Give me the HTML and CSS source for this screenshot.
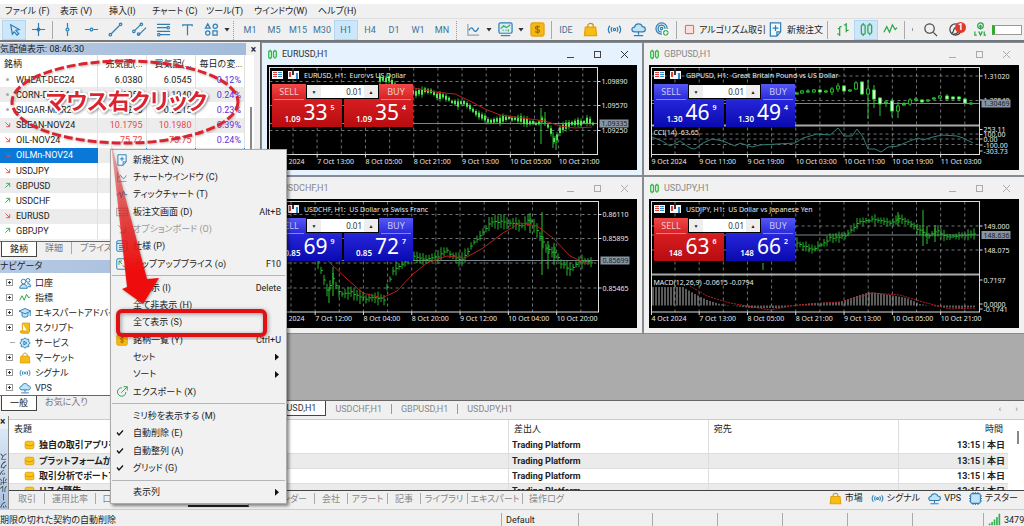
FILE: index.html
```html
<!DOCTYPE html>
<html lang="ja">
<head>
<meta charset="utf-8">
<title>Trading Platform</title>
<link rel="stylesheet" href="styles.css">
</head>
<body>
<svg class="defs" aria-hidden="true">
  <symbol id="i-cursor" viewBox="0 0 16 16"><path d="M4 3l9 5-3.500 1 3 3.500-1.800 1.500-3-3.500-2 2.500z"/></symbol>
  <symbol id="i-cross" viewBox="0 0 16 16"><path d="M8 1v14M1 8h14"/><circle cx="8" cy="8" r="1.500"/></symbol>
  <symbol id="i-vline" viewBox="0 0 16 16"><path d="M8 1v5M8 10v5"/><circle cx="8" cy="8" r="1.500"/></symbol>
  <symbol id="i-hline" viewBox="0 0 16 16"><path d="M1 8h5M10 8h5"/><circle cx="8" cy="8" r="1.500"/></symbol>
  <symbol id="i-trend" viewBox="0 0 16 16"><path d="M3.500 12.500l9-9"/><circle cx="2.500" cy="13.500" r="1.300"/><circle cx="13.500" cy="2.500" r="1.300"/></symbol>
  <symbol id="i-channel" viewBox="0 0 16 16"><path d="M3 9l6-6M7 14l8-8"/><circle cx="2" cy="10" r="1.300"/><circle cx="10" cy="2.500" r="1.300"/><circle cx="7" cy="13" r="1.300"/></symbol>
  <symbol id="i-fib" viewBox="0 0 16 16"><path d="M1 2.500h14M1 6h11M1 10h14M4 13.500h11"/><circle cx="13" cy="6" r="1.300"/><circle cx="3" cy="13.500" r="1.300"/></symbol>
  <symbol id="i-text" viewBox="0 0 16 16"><path d="M3 4.500V3h10v1.500M8 3v11"/></symbol>
  <symbol id="i-shapes" viewBox="0 0 16 16"><path d="M4 2L1.500 6.500h5zM9.500 9.500h4.500v4.500H9.500z"/><circle cx="12" cy="4.500" r="2.300"/><circle cx="4" cy="11.800" r="2.300"/></symbol>
  <symbol id="i-chart" viewBox="0 0 16 16"><path d="M2 2v12h12" stroke="#8aa6b8"/><path d="M3 9c3-5 4-2 5.500 0s3 1 5-3"/></symbol>
  <symbol id="i-board" viewBox="0 0 16 16"><rect x="1" y="1" width="14" height="11" rx="1.500" fill="#d9edf8"/><path d="M3 14.500h10"/><path d="M3 7l3-3 3 2 4-3M5 9h1M8 9h1M11 8v2" stroke="#3bab50"/></symbol>
  <symbol id="i-gold" viewBox="0 0 16 16"><rect x="1" y="1" width="14" height="14" rx="2" fill="#f6b816" stroke="#e2a20b"/><path d="M10.500 5.500C9 4 5.500 4.500 5.800 6.500s4.500 1 4.500 3-3.300 2-4.800.7M8 3.500v9" stroke="#a36f00"/></symbol>
  <symbol id="i-bag" viewBox="0 0 16 16"><path d="M5 7V4.500c0-4 6-4 6 0V7" stroke="#c89210"/><path d="M2.500 5.500h11l1 9h-13z" fill="#f8bd14" stroke="#e2a20b"/></symbol>
  <symbol id="i-signal" viewBox="0 0 16 16"><circle cx="8" cy="8" r="1.200"/><path d="M5.500 5.500c-1.300 1.500-1.300 3.500 0 5M10.500 5.500c1.300 1.500 1.300 3.500 0 5M3 4c-2 2.500-2 5.500 0 8M13 4c2 2.500 2 5.500 0 8"/></symbol>
  <symbol id="i-cloud" viewBox="0 0 16 16"><path d="M4 10.500c-4 0-4-5-.3-5 1-4.500 7.300-4.500 8.300-.5 4.500 0 4 5.500.5 5.500z" fill="#bfe3f7"/><path d="M8 10.500v3M3 14.500h10"/></symbol>
  <symbol id="i-target" viewBox="0 0 16 16"><circle cx="7" cy="7" r="6"/><circle cx="7" cy="7" r="3.700"/><circle cx="7" cy="7" r="1.300"/><circle cx="11.500" cy="11.500" r="3.700" fill="#3db455" stroke="#fff"/><path d="M9.500 11.500h4M11.500 9.500v4" stroke="#fff"/></symbol>
  <symbol id="i-stop" viewBox="0 0 16 16"><rect x="2" y="2" width="12" height="12" rx="1" fill="#fbdede" stroke="#d9534f"/></symbol>
  <symbol id="i-order" viewBox="0 0 16 16"><path d="M2.500 1h11v9.500l-4 4.500h-7zM9.500 15v-4.500h4" fill="#f2f9ff"/><path d="M5 6.500h6M8 3.500v6"/></symbol>
  <symbol id="i-bars" viewBox="0 0 16 16"><path d="M5 5v10M5 7H3M5 13H2.500M5 5h2M12 1v10M12 3h-2.500M12 9h2.500"/></symbol>
  <symbol id="i-candles" viewBox="0 0 16 16"><path d="M4.500 1v2M4.500 13v2M11.500 1v2M11.500 12v2"/><rect x="2.500" y="3" width="4" height="10" rx="1"/><rect x="9.500" y="3" width="4" height="9" rx="1"/></symbol>
  <symbol id="i-wave" viewBox="0 0 16 16"><path d="M1 11l3-6 3 6 3-8 3 5 2-2"/></symbol>
  <symbol id="i-search" viewBox="0 0 16 16"><circle cx="7" cy="7" r="5"/><path d="M11 11l4 4"/></symbol>
  <symbol id="i-bell" viewBox="0 0 16 16"><circle cx="8" cy="8" r="6"/><path d="M4 12c3-1 1-5 4-6M6 13c3 0 5-2 6-5"/></symbol>
  <symbol id="i-lvl" viewBox="0 0 16 16"><circle cx="8" cy="4" r="3"/><path d="M8 3v5M6.500 4.500h3M2 10v4h2M6 10l2 4 2-4M12 10v4h2"/></symbol>
  <symbol id="i-tick" viewBox="0 0 16 16"><path d="M1 9h2l2-4 2 8 3-9 2 5h3"/></symbol>
  <symbol id="i-depth" viewBox="0 0 16 16"><rect x="1" y="3" width="14" height="10"/><path d="M3 6h4M9 6h4M3 10h4M9 10h4"/></symbol>
  <symbol id="i-spec" viewBox="0 0 16 16"><rect x="1" y="1" width="14" height="14" rx="1.500" fill="#d9edf8"/><path d="M1 4.500h14M4 7.500h8M4 10h8M4 12.500h5"/></symbol>
  <symbol id="i-popup" viewBox="0 0 16 16"><rect x="1" y="1" width="14" height="14" rx="1.500"/><path d="M4 9V4h4M4 4l4 4" stroke="#2ea84a"/><path d="M9 10l4 3" stroke="#e03030"/></symbol>
  <symbol id="i-export" viewBox="0 0 16 16"><path d="M13 8c0 8-11 7-11 0 0-4 3-6 6-5.500M10 1h5v5M15 1L7 9"/></symbol>
  <symbol id="i-check" viewBox="0 0 16 16"><path d="M2 7l4 5 8-9"/></symbol>
  <symbol id="i-people" viewBox="0 0 16 16"><circle cx="6" cy="6" r="3"/><circle cx="12" cy="4.500" r="2.500"/><path d="M1 15c0-7 10-7 10 0zM11 9c3-1 4.500 1 4.500 4H12" fill="#bfe3f7"/></symbol>
  <symbol id="i-cap" viewBox="0 0 16 16"><path d="M0 5.500L8 2l8 3.500L8 9zM4 8v4c2 2 6 2 8 0V8M15 6v6" fill="#bfe3f7"/></symbol>
  <symbol id="i-script" viewBox="0 0 16 16"><path d="M4.500 1.500h9.500V12c0 4-3.500 3-3.500 0h-9c0 2 1 3 3 3h8M4.500 1.500V12" fill="#f8bd14" stroke="#d99c10"/></symbol>
  <symbol id="i-gear" viewBox="0 0 16 16"><path d="M8 1l2 2h3v3l2 2-2 2v3h-3l-2 2-2-2H3v-3L1 8l2-2V3h3z" fill="#bfe3f7"/><path d="M6.500 5.500v5l4-2.500z"/></symbol>
  <symbol id="i-mail" viewBox="0 0 16 16"><rect x="1" y="2" width="14" height="12" rx="2.500" fill="#fac515" stroke="#d89a10"/><path d="M1.500 7c3 3 10 3 13 0" stroke="#c98a00"/></symbol>
  <symbol id="i-chip" viewBox="0 0 16 16"><path d="M5 0v16M8 0v16M11 0v16M0 5h16M0 8h16M0 11h16"/><rect x="2" y="2" width="12" height="12" rx="2" fill="#bfe3f7"/></symbol>
  <symbol id="i-up" viewBox="0 0 16 16"><path d="M3 13L13 3M5 3h8v8"/></symbol>
  <symbol id="i-down" viewBox="0 0 16 16"><path d="M3 3l10 10M13 5v8H5"/></symbol>
  <symbol id="i-net" viewBox="0 0 16 16"><path d="M1 13h2v2H1zM4 11h2v4H4zM7 8h2v7H7zM10 5h2v10h-2zM13 1h2v14h-2z" fill="#2fae4d" stroke="none"/></symbol>
</svg>

<nav class="menubar">
  <button>ファイル (F)</button><button>表示 (V)</button><button>挿入(I)</button><button>チャート (C)</button><button>ツール(T)</button><button>ウインドウ(W)</button><button>ヘルプ(H)</button>
</nav>

<div class="toolbar">
  <button class="tool on" aria-label="カーソル"><svg class="ic"><use href="#i-cursor"/></svg></button>
  <button class="tool" aria-label="十字"><svg class="ic"><use href="#i-cross"/></svg></button>
  <i class="sep"></i>
  <button class="tool" aria-label="垂直線"><svg class="ic"><use href="#i-vline"/></svg></button>
  <button class="tool" aria-label="水平線"><svg class="ic"><use href="#i-hline"/></svg></button>
  <button class="tool" aria-label="トレンドライン"><svg class="ic"><use href="#i-trend"/></svg></button>
  <button class="tool" aria-label="チャネル"><svg class="ic"><use href="#i-channel"/></svg></button>
  <button class="tool" aria-label="フィボナッチ"><svg class="ic"><use href="#i-fib"/></svg></button>
  <button class="tool" aria-label="テキスト"><svg class="ic"><use href="#i-text"/></svg></button>
  <button class="tool" aria-label="図形"><svg class="ic"><use href="#i-shapes"/></svg></button>
  <i class="caret"></i><i class="grip"></i>
  <button class="tool">M1</button><button class="tool">M5</button><button class="tool">M15</button><button class="tool">M30</button><button class="tool on">H1</button><button class="tool">H4</button><button class="tool">D1</button><button class="tool">W1</button><button class="tool">MN</button>
  <i class="grip"></i>
  <button class="tool" aria-label="チャート"><svg class="ic"><use href="#i-chart"/></svg></button><i class="caret"></i>
  <button class="tool" aria-label="テンプレート"><svg class="ic"><use href="#i-board"/></svg></button><i class="caret"></i>
  <button class="tool" aria-label="銘柄"><svg class="ic"><use href="#i-gold"/></svg></button>
  <i class="sep"></i>
  <button class="tool">IDE</button>
  <button class="tool" aria-label="マーケット"><svg class="ic"><use href="#i-bag"/></svg></button>
  <button class="tool" aria-label="シグナル"><svg class="ic"><use href="#i-signal"/></svg></button>
  <button class="tool" aria-label="VPS"><svg class="ic"><use href="#i-cloud"/></svg></button>
  <button class="tool" aria-label="コミュニティ"><svg class="ic"><use href="#i-target"/></svg></button>
  <i class="sep"></i>
  <button class="tool wide algo"><svg class="ic small"><use href="#i-stop"/></svg>アルゴリズム取引</button>
  <button class="tool wide order"><svg class="ic"><use href="#i-order"/></svg>新規注文</button>
  <i class="sep"></i>
  <button class="tool green" aria-label="バー"><svg class="ic"><use href="#i-bars"/></svg></button>
  <button class="tool green on" aria-label="ローソク足"><svg class="ic"><use href="#i-candles"/></svg></button>
  <button class="tool green" aria-label="ライン"><svg class="ic"><use href="#i-wave"/></svg></button>
  <i class="sep"></i>
  <i class="more"></i>
  <button class="tool dark" aria-label="検索"><svg class="ic"><use href="#i-search"/></svg></button>
  <button class="tool dark alert" aria-label="通知"><svg class="ic"><use href="#i-bell"/></svg><b class="badge">1</b></button>
  <button class="tool green" aria-label="レベル"><svg class="ic"><use href="#i-lvl"/></svg></button>
  <i class="level"></i>
</div>

<main class="main">
  <aside class="side">
    <div class="caption"><span>気配値表示: 08:46:30</span><button class="x" aria-label="閉じる">×</button></div>
    <div class="watch">
      <table class="quotes">
        <thead><tr><th class="c-name">銘柄</th><th class="c-num">売気配(...</th><th class="c-num">買気配(...</th><th>毎日の変...</th></tr></thead>
        <tbody>
          <tr><td><i class="dot"></i>WHEAT-DEC24</td><td>6.0380</td><td>6.0545</td><td class="pct">0.12%</td></tr>
          <tr><td><i class="dot"></i>CORN-DEC24</td><td>4.1850</td><td>4.1940</td><td class="pct">0.24%</td></tr>
          <tr><td><i class="dot"></i>SUGAR-MAR25</td><td>0.2210</td><td>0.2215</td><td class="pct">0.23%</td></tr>
          <tr class="fall"><td><svg class="dir"><use href="#i-down"/></svg>SBEAN-NOV24</td><td>10.1795</td><td>10.1980</td><td class="pct">0.39%</td></tr>
          <tr class="fall"><td><svg class="dir"><use href="#i-down"/></svg>OIL-NOV24</td><td>75.72</td><td>75.75</td><td class="pct">0.24%</td></tr>
          <tr class="fall sel"><td><svg class="dir"><use href="#i-down"/></svg>OILMn-NOV24</td><td></td><td></td><td></td></tr>
          <tr class="fall"><td><svg class="dir"><use href="#i-down"/></svg>USDJPY</td><td></td><td></td><td></td></tr>
          <tr class="rise"><td><svg class="dir"><use href="#i-up"/></svg>GBPUSD</td><td></td><td></td><td></td></tr>
          <tr class="rise"><td><svg class="dir"><use href="#i-up"/></svg>USDCHF</td><td></td><td></td><td></td></tr>
          <tr class="fall"><td><svg class="dir"><use href="#i-down"/></svg>EURUSD</td><td></td><td></td><td></td></tr>
          <tr class="rise"><td><svg class="dir"><use href="#i-up"/></svg>GBPJPY</td><td></td><td></td><td></td></tr>
        </tbody>
      </table>
      <i class="thumb"></i>
    </div>
    <div class="tabs watch-tabs"><button class="tab active">銘柄</button><button class="tab">詳細</button><button class="tab">プライスボード</button></div>
    <div class="caption nav-caption"><span>ナビゲータ</span><button class="x" aria-label="閉じる">×</button></div>
    <ul class="tree">
      <li><i class="plus"></i><svg class="ic"><use href="#i-people"/></svg>口座</li>
      <li><i class="plus"></i><svg class="ic green"><use href="#i-wave"/></svg>指標</li>
      <li><i class="plus"></i><svg class="ic"><use href="#i-cap"/></svg>エキスパートアドバイザ</li>
      <li><i class="plus"></i><svg class="ic"><use href="#i-script"/></svg>スクリプト</li>
      <li><i class="leaf"></i><svg class="ic"><use href="#i-gear"/></svg>サービス</li>
      <li><i class="plus"></i><svg class="ic"><use href="#i-bag"/></svg>マーケット</li>
      <li><i class="plus"></i><svg class="ic"><use href="#i-signal"/></svg>シグナル</li>
      <li><i class="plus"></i><svg class="ic"><use href="#i-cloud"/></svg>VPS</li>
    </ul>
    <div class="tabs nav-tabs"><button class="tab active">一般</button><button class="tab">お気に入り</button></div>
  </aside>

  <section class="work">
    <div class="windows" id="windows"></div>
    <div class="chart-tabs"><button class="ctab active">EURUSD,H1</button><button class="ctab">USDCHF,H1</button><button class="ctab">GBPUSD,H1</button><button class="ctab">USDJPY,H1</button><span class="pager">‹<span>›</span></span></div>
  </section>
</main>

<section class="toolbox">
  <div class="strip"><button class="x" aria-label="閉じる">×</button><span>ツールボックス</span></div>
  <div class="box">
    <div class="mail-area">
      <table class="mail">
        <thead><tr><th class="m-title">表題</th><th class="m-from">差出人</th><th class="m-to">宛先</th><th class="m-time">時間</th></tr></thead>
        <tbody>
          <tr><td><svg class="ic"><use href="#i-mail"/></svg>独自の取引アプリを</td><td>Trading Platform</td><td></td><td>13:15 | 本日</td></tr>
          <tr><td><svg class="ic"><use href="#i-mail"/></svg>プラットフォームから直</td><td>Trading Platform</td><td></td><td>13:15 | 本日</td></tr>
          <tr><td><svg class="ic"><use href="#i-mail"/></svg>取引分析でポートフォ</td><td>Trading Platform</td><td></td><td>13:15 | 本日</td></tr>
          <tr><td><svg class="ic"><use href="#i-mail"/></svg>リスク警告</td><td>Trading Platform</td><td></td><td>13:15 | 本日</td></tr>
        </tbody>
      </table>
      <i class="thumb"></i>
    </div>
    <div class="box-foot">
      <div class="box-tabs"><button>取引</button><button>運用比率</button><button>口座履歴</button><button>ニュース</button><button class="active">メールボックス</button><button class="right">カレンダー</button><button>会社</button><button>アラート</button><button>記事</button><button>ライブラリ</button><button>エキスパート</button><button>操作ログ</button></div>
      <div class="links"><button><svg class="ic"><use href="#i-bag"/></svg>市場</button><button><svg class="ic"><use href="#i-signal"/></svg>シグナル</button><button><svg class="ic"><use href="#i-cloud"/></svg>VPS</button><button><svg class="ic"><use href="#i-chip"/></svg>テスター</button></div>
    </div>
  </div>
</section>

<footer class="status">
  <span>期限の切れた契約の自動削除</span><span>Default</span><span></span><span></span><span></span><span></span><span></span><span></span><span><svg class="ic"><use href="#i-net"/></svg>3479,</span>
</footer>

<div class="context" role="menu">
  <button><svg class="ic"><use href="#i-order"/></svg><span>新規注文 (N)</span></button>
  <button><svg class="ic"><use href="#i-chart"/></svg><span>チャートウインドウ (C)</span></button>
  <button><svg class="ic"><use href="#i-tick"/></svg><span>ティックチャート (T)</span></button>
  <button><svg class="ic gray"><use href="#i-depth"/></svg><span>板注文画面 (D)</span><kbd>Alt+B</kbd></button>
  <button disabled><svg class="ic gray"><use href="#i-down"/></svg><span>オプションボード (O)</span></button>
  <button><svg class="ic"><use href="#i-spec"/></svg><span>仕様 (P)</span></button>
  <button><svg class="ic"><use href="#i-popup"/></svg><span>ポップアッププライス (o)</span><kbd>F10</kbd></button>
  <hr>
  <button><i></i><span>非表示 (I)</span><kbd>Delete</kbd></button>
  <button><i></i><span>全て非表示 (H)</span></button>
  <button><i></i><span>全て表示 (S)</span></button>
  <button><svg class="ic"><use href="#i-gold"/></svg><span>銘柄一覧 (Y)</span><kbd>Ctrl+U</kbd></button>
  <button><i></i><span>セット</span><b class="sub"></b></button>
  <button><i></i><span>ソート</span><b class="sub"></b></button>
  <button><svg class="ic green"><use href="#i-export"/></svg><span>エクスポート (X)</span></button>
  <hr>
  <button><i></i><span>ミリ秒を表示する (M)</span></button>
  <button><svg class="ic tick"><use href="#i-check"/></svg><span>自動削除 (E)</span></button>
  <button><svg class="ic tick"><use href="#i-check"/></svg><span>自動整列 (A)</span></button>
  <button><svg class="ic tick"><use href="#i-check"/></svg><span>グリッド (G)</span></button>
  <hr>
  <button><i></i><span>表示列</span><b class="sub"></b></button>
</div>

<svg class="notes" viewBox="0 0 290 340">
  <defs>
    <linearGradient id="arrow" x1="0" y1="0" x2="0" y2="1"><stop offset="0" stop-color="#ec4a4a" stop-opacity=".35"/><stop offset=".45" stop-color="#ee2020" stop-opacity=".75"/><stop offset=".8" stop-color="#ef0c0c"/></linearGradient>
  </defs>
  <ellipse cx="125" cy="102" rx="113" ry="41" class="ring"/>
  <path d="M111 143L147 279l12-1-16 26-21-15 5-2z" fill="url(#arrow)" class="arrow"/>
  <rect x="118" y="311" width="147" height="24" rx="4" class="frame"/>
  <text x="46" y="109" class="callout">マウス右クリック</text>
</svg>
<script src="charts.js"></script>
</body>
</html>
```
FILE: styles.css
```css
* { box-sizing: border-box; }
body {
  margin: 0;
  height: 100vh;
  display: flex;
  flex-direction: column;
  position: relative;
  overflow: hidden;
  background: #f0f0f0;
  color: #222;
  font: 9px/12px Roboto, "Noto Sans CJK JP", sans-serif;
  font-feature-settings: "palt";
  white-space: nowrap;
}
button {
  margin: 0;
  padding: 0;
  border: 0;
  background: none;
  color: inherit;
  font: inherit;
  font-feature-settings: inherit;
  white-space: nowrap;
}
.defs { position: absolute; width: 0; height: 0; }
.ic {
  width: 13px;
  height: 13px;
  flex: none;
  fill: none;
  stroke: #2f7fb5;
  stroke-width: 1.3;
}
.green, .green .ic { stroke: #2aa648; }
.dark .ic { stroke: #444; }
.gray { stroke: #999; }

.menubar {
  height: 18px;
  flex: none;
  display: grid;
  grid-template-columns: 55px 49px 43px 54px 48px 64px 50px;
  align-items: center;
  padding-left: 5px;
  border-top: 4px solid #fff;
}
.menubar button { text-align: left; line-height: 10px; }

.toolbar {
  height: 24px;
  flex: none;
  display: flex;
  align-items: center;
  padding-left: 2px;
  border-top: 1px solid #ddd;
  border-bottom: 2px solid #72777c;
}
.tool {
  width: 24px;
  height: 20px;
  flex: none;
  display: flex;
  align-items: center;
  justify-content: center;
  color: #3b7396;
  border: 1px solid transparent;
}
.tool .ic { width: 15px; height: 15px; }
.tool.on { background: #cce6fa; border-color: #b3d7f2; }
.tool.wide { gap: 4px; color: #222; justify-content: flex-start; }
.tool .small { width: 11px; height: 11px; }
.algo { width: 88px; padding-left: 4px; }
.order { width: 58px; }
.sep { width: 5px; height: 18px; flex: none; background: linear-gradient(90deg, transparent 2px, #aaa 2px 3px, transparent 3px); }
.grip { width: 7px; height: 20px; flex: none; background: repeating-linear-gradient(#f0f0f0 0 1px, transparent 1px 2px), linear-gradient(90deg, transparent 2px, #999 2px 3px, transparent 3px); }
.caret { width: 8px; height: 4px; flex: none; background: #333; clip-path: polygon(1px 0, 7px 0, 4px 4px); }
.more { width: 6px; height: 3px; border-left: 1px solid #999; margin-left: 5px; }
.alert { position: relative; width: 26px; }
.badge {
  position: absolute;
  right: 1px;
  top: 1px;
  width: 11px;
  height: 11px;
  border-radius: 50%;
  background: #dd3b27;
  color: #fff;
  line-height: 11px;
  text-align: center;
}
.level { flex: 1; height: 10px; margin-right: 2px; border: 1px solid #999; border-left: 3px solid #38a832; background: #fff; }

.main { flex: 1; min-height: 0; display: grid; grid-template-columns: 261px 1fr; }
.side { display: flex; flex-direction: column; min-width: 0; min-height: 0; border-right: 1px solid #777; padding-top: 1px; }
.caption {
  height: 12px;
  flex: none;
  display: flex;
  justify-content: space-between;
  padding-right: 4px;
  background: linear-gradient(90deg, #b5c9e3, #a3bbda) 0 0 / 246px 100% no-repeat;
}
.x { font-size: 10px; font-weight: 700; line-height: 11px; }
.watch { display: flex; background: #fff; height: 184px; flex: none; margin-right: 6px; }
.quotes { width: 245px; border-collapse: collapse; table-layout: fixed; }
.quotes th, .quotes td { padding: 0 3px; height: 15px; line-height: 14px; border-right: 1px solid #e0e0e0; overflow: hidden; text-align: right; }
.quotes th { height: 17px; font-weight: 400; text-align: left; padding-left: 4px; }
.quotes th:nth-child(2), .quotes th:nth-child(3) { padding-left: 8px; }
.c-name { width: 97px; }
.c-num { width: 49px; }
.quotes td:first-child { text-align: left; padding-left: 4px; }
.quotes tr:nth-child(even) td { background: #ececec; }
.quotes .fall td { color: #e8474f; }
.quotes .fall td:first-child { color: #222; }
.quotes td.pct, .quotes .fall td.pct { color: #5634d8; }
.quotes .sel td, .quotes .sel td:first-child { background: #0a78d6; color: #fff; border-color: #0a78d6; }
.dir { width: 7px; height: 7px; margin-right: 5px; fill: none; stroke: #e04848; stroke-width: 2; }
.rise .dir { stroke: #2aa648; }
.dot { display: inline-block; width: 3px; height: 3px; margin: 0 7px 2px 2px; border-radius: 50%; background: #aaa; }
.thumb { display: block; width: 2px; flex: none; background: #888; }
.watch .thumb { height: 56px; margin: 52px 0 0 5px; }
.tabs { height: 16px; flex: none; display: flex; overflow: hidden; }
.watch-tabs { margin: 2px 0 3px; border-top: 1px solid #666; }
.tab { padding: 0 8px; color: #777; border-right: 1px solid #aaa; height: 12px; }
.tab:last-child { border: 0; }
.tab.active { height: 100%; background: #fff; color: #222; border: 1px solid #444; border-top: 0; margin-left: 1px; }
.nav-caption { height: 13px; }
.tree { flex: 1; min-height: 0; margin: 0; padding: 2px 0 0 6px; list-style: none; background: #fff; overflow: hidden; }
.tree li { height: 15px; display: flex; align-items: center; gap: 4px; }
.tree .ic { width: 12px; height: 12px; }
.plus, .leaf { width: 9px; height: 15px; flex: none; background: linear-gradient(#aaa, #aaa) 4px 7px / 9px 1px no-repeat; }
.plus { height: 7px; width: 7px; margin-right: 2px; border: 1px solid #999; background: linear-gradient(#333, #333) 1px 2px / 3px 1px no-repeat, linear-gradient(#333, #333) 2px 1px / 1px 3px no-repeat; }
.nav-tabs { border-top: 1px solid #666; margin-bottom: 5px; }

.work { display: flex; flex-direction: column; min-width: 0; background: #ababab; }
.windows { flex: 1; min-height: 0; display: grid; grid-template-columns: 1fr 1fr; gap: 2px; align-content: start; padding: 1px 0 0 1px; }
.win { background: #f1f1f1; padding: 0 5px 5px; color: #888; outline: 1px solid #858b90; min-width: 0; }
.win.focus { background: #e6f2fd; color: #333; }
.win-bar { height: 22px; display: flex; align-items: center; gap: 4px; }
.win-bar .ic { width: 11px; height: 11px; stroke: #2aba3c; stroke-width: 1.8; }
.win-bar .ctl { margin-left: auto; display: flex; gap: 20px; padding-right: 9px; }
.ctl button { width: 7px; height: 7px; border: 1px solid #aaa; }
.focus .ctl button { border-color: #444; }
.ctl .min { border-width: 0 0 1px; }
.ctl .close { border: 0; background: linear-gradient(45deg, transparent 44%, #aaa 44% 56%, transparent 56%), linear-gradient(135deg, transparent 44%, #aaa 44% 56%, transparent 56%); }
.focus .ctl .close { background: linear-gradient(45deg, transparent 44%, #333 44% 56%, transparent 56%), linear-gradient(135deg, transparent 44%, #333 44% 56%, transparent 56%); }
.chart { position: relative; background: #000; }
.chart svg { display: block; width: 100%; height: auto; font: 7px "Noto Sans", sans-serif; }
.chart text { fill: #e8e8e8; }
.chart text.now { fill: #182028; }
.deal { position: absolute; left: 5px; top: 19px; width: 141px; display: grid; grid-template-columns: 1fr 1fr; gap: 2px; color: #fff; font-family: "Noto Sans", sans-serif; }
.quote { height: 43px; display: flex; flex-direction: column; background: linear-gradient(#f04848, #d41c20 40%, #b80c10); text-align: left; }
.quote.blue { background: linear-gradient(#5558f4, #2424d8 40%, #0a0ab0); }
.quote .side-name { width: 30px; height: 16px; line-height: 15px; margin: 0 2px; text-align: center; color: #f4caca; border-bottom: 1px solid #ffffff70; }
.quote.blue .side-name { color: #c8c8fa; }
.quote.buy .side-name { align-self: flex-end; }
.price { display: flex; align-items: flex-end; justify-content: flex-end; padding-right: 7px; gap: 3px; height: 26px; }
.price small { font-size: 8px; font-weight: 600; line-height: 15px; }
.price big { font-size: 21px; line-height: 27px; }
.price sup { font-size: 7px; font-weight: 600; line-height: 10px; align-self: flex-start; padding-top: 3px; }
.lot { position: absolute; left: 34px; top: 0; width: 73px; height: 15px; display: flex; border: 1px solid #000; background: #eee; }
.lot input { width: 43px; min-width: 0; padding: 0 2px; border: 0; background: #fff; text-align: right; font: 8px "Noto Sans", sans-serif; color: #333; }
.lot button { flex: 1; font-size: 5px; line-height: 12px; color: #222; }

.chart-tabs { height: 16px; flex: none; display: flex; align-items: center; background: #f0f0f0; border-top: 1px solid #666; color: #888; }
.ctab { padding: 0 9px; height: 10px; line-height: 10px; border-right: 1px solid #999; }
.ctab:nth-child(4) { border: 0; }
.ctab.active { height: 100%; background: #fff; color: #333; border-right: 1px solid #444; border-bottom: 1px solid #444; }
.pager { margin-left: auto; display: flex; gap: 14px; padding-right: 6px; }

.toolbox { height: 94px; flex: none; display: flex; border-bottom: 1px solid #ccc; }
.strip { width: 9px; flex: none; overflow: hidden; background: linear-gradient(#f0f0f0 12px, #dbe8f6 13px, #a9c0dd); border-right: 1px solid #888; }
.strip .x { display: block; }
.strip span { display: block; margin-top: 20px; height: 62px; writing-mode: vertical-rl; transform: rotate(180deg); line-height: 9px; font-size: 8px; }
.box { flex: 1; min-width: 0; display: flex; flex-direction: column; padding-top: 3px; }
.mail-area { flex: 1; min-height: 0; overflow: hidden; display: flex; align-items: flex-start; background: #fff; border-bottom: 1px solid #444; border-top: 1px solid #ccc; }
.mail { flex: 1; border-collapse: collapse; table-layout: fixed; }
.mail th { height: 18px; font-weight: 400; text-align: left; padding: 0 5px; border-right: 1px solid #ddd; }
.mail td { height: 15px; line-height: 14px; font-weight: 700; padding: 0 3px; border-right: 1px solid #ddd; border-bottom: 1px solid #ddd; }
.mail tr:nth-child(even) td { background: #ebebeb; }
.mail .m-time, .mail td:last-child { text-align: right; border-right: 0; }
.mail td:first-child { padding-left: 15px; }
.mail .ic { width: 11px; height: 10px; margin-right: 4px; vertical-align: -2px; }
.m-title { width: 50%; }
.m-from { width: 20%; }
.m-to { width: 19%; }
.mail-area .thumb { height: 13px; margin: 11px 5px 0 9px; }
.box-foot { height: 18px; flex: none; display: flex; justify-content: space-between; align-items: flex-start; padding-top: 1px; line-height: 11px; }
.box-tabs { display: grid; grid-template-columns: 35px 51px 50px 42px 61px 66px 33px 40px 33px 47px 55px 47px; color: #888; padding: 1px 0 0 1px; }
.box-tabs button { border-right: 1px solid #aaa; height: 11px; line-height: 10px; }
.box-tabs button:last-child { border: 0; }
.box-tabs .active { height: 14px; color: #222; background: #fff; border-bottom: 2px solid #222; }
.box-tabs .right { text-align: right; padding-right: 7px; }
.links { display: flex; gap: 8px; padding-right: 6px; }
.links button { display: flex; align-items: center; gap: 3px; }

.status { height: 16px; flex: none; display: grid; grid-template-columns: 501px 77px 74px 65px 65px 65px 65px 71px 1fr; align-items: end; }
.status span { height: 13px; border-left: 1px solid #aaa; padding-left: 4px; display: flex; align-items: center; gap: 3px; }
.status span:first-child { border: 0; padding: 0; }

.context {
  position: absolute;
  left: 110px;
  top: 149px;
  width: 177px;
  height: 355px;
  display: flex;
  flex-direction: column;
  padding: 1px 1px 2px;
  background: #f1f1f1;
  border: 1px solid #aaa;
  box-shadow: 2px 2px 3px #0007;
}
.context button { flex: 1; min-height: 0; display: grid; grid-template-columns: 13px 1fr auto; column-gap: 4px; align-items: center; text-align: left; padding: 0 4px 0 4px; }
.context button:disabled { color: #999; }
.context .ic { width: 12px; height: 12px; }
.context .tick { width: 8px; height: 8px; stroke: #111; stroke-width: 2.5; }
.context kbd { font: inherit; }
.context hr { width: 100%; height: 1px; margin: 3px 0; border: 0; background: #b5b5b5; flex: none; }
.sub { width: 4px; height: 7px; margin-right: 2px; background: #111; clip-path: polygon(0 0, 100% 50%, 0 100%); }

.notes { position: absolute; left: 0; top: 0; width: 290px; height: 340px; pointer-events: none; }
.ring { fill: none; stroke: #dc2430; stroke-width: 3; stroke-dasharray: 9 3; filter: drop-shadow(1px 1px 1px #0004); }
.arrow { filter: drop-shadow(1px 1px 1px #0005); }
.frame { fill: none; stroke: #e01014; stroke-width: 4; filter: drop-shadow(1px 1px 2px #0006); }
.callout { font: 700 22px "Noto Sans CJK JP", sans-serif; font-feature-settings: "palt"; fill: #dc2430; stroke: #fff; stroke-width: 4; stroke-linejoin: round; paint-order: stroke; filter: drop-shadow(1px 1px 1px #0006); }
```
FILE: charts.js
```js
// Each chart is drawn in one shared canvas coordinate system; box = [x, y, width, height].
const charts = [
  {
    id: "EURUSD", desc: "Euro vs US Dollar", focus: true, box: [267, 65, 370, 105],
    frame: [269.5, 67.5, 597.5, 154.5], grid: 293, rows: [81.5, 105.5, 130.5], labels: [["1.09890", 81.5], ["1.09570", 105.5], ["1.09250", 130.5]],
    now: ["1.09335", 123.5], times: ["4 Oct 2024", "7 Oct 13:00", "8 Oct 05:00", "8 Oct 21:00", "9 Oct 13:00", "10 Oct 05:00", "10 Oct 21:00"],
    track: [[380, 80], [390, 79], [400, 92], [414, 93], [427, 90], [437, 95], [447, 98], [457, 104], [463, 102], [473, 110], [480, 115], [490, 121], [500, 120], [513, 118], [527, 121], [537, 125], [543, 118], [550, 128], [555, 144], [560, 130], [570, 124], [580, 123], [588, 121], [593, 123]],
    noise: 4, spikes: [[541, 108, 144], [545, 112, 126], [553, 132, 148], [556, 136, 150]], solid: true,
    avg: [[414, 88], [435, 92], [455, 94], [470, 101], [485, 109], [500, 115], [515, 117], [530, 119], [545, 121], [560, 126], [575, 128], [592, 127]],
    deal: ["red", "1.09", "33", "5", "red", "1.09", "35", "4"]
  },
  {
    id: "GBPUSD", desc: "Great Britain Pound vs US Dollar", box: [649, 65, 370, 105],
    frame: [651.5, 67.5, 979.5, 154.5], split: 125.5, grid: 675, rows: [76, 100.5, 134, 139, 144.5],
    labels: [["1.31020", 76], ["1.30540", 100], ["253.11", 129.5], ["100.00", 134.5], ["0.00", 139], ["-100.00", 145], ["-303.73", 151]],
    now: ["1.30469", 103.5], times: ["9 Oct 2024", "9 Oct 11:00", "9 Oct 19:00", "10 Oct 03:00", "10 Oct 11:00", "10 Oct 19:00", "11 Oct 03:00"],
    candles: [[797, 92, 95, 93, 94], [802, 90, 94, 91, 93], [808, 89, 93, 91, 92], [814, 89, 93, 90, 92], [820, 89, 92, 90, 92, 1], [826, 90, 93, 91, 92], [832, 87, 95, 89, 92], [838, 83, 92, 86, 89], [844, 85, 92, 86, 91, 1], [850, 89, 92, 90, 91], [856, 81, 90, 83, 89], [862, 81, 95, 82, 94, 1], [868, 80, 119, 89, 94], [874, 85, 108, 90, 99, 1], [880, 97, 116, 98, 104, 1], [886, 100, 107, 102, 103], [892, 99, 117, 101, 111, 1], [898, 102, 118, 106, 111], [904, 102, 106, 104, 105], [910, 98, 106, 100, 104], [916, 97, 102, 99, 100], [922, 99, 103, 100, 102, 1], [928, 99, 102, 100, 101], [934, 97, 100, 98, 99], [940, 95, 99, 96, 98], [947, 94, 101, 96, 99, 1], [953, 96, 100, 97, 99, 1], [959, 96, 101, 97, 99, 1], [965, 98, 104, 99, 103, 1], [971, 102, 105, 103, 104]],
    lower: "CCI(14) -63.65", lowerY: 135,
    line: [[652, 137], [662, 141], [670, 146], [680, 141], [690, 148], [695, 149], [703, 143], [712, 139], [723, 141], [735, 146], [740, 143], [752, 147], [760, 145], [795, 143], [803, 138], [817, 134], [830, 135], [838, 128], [844, 136], [852, 136], [857, 129], [863, 137], [868, 149], [875, 149], [881, 152], [888, 147], [898, 146], [907, 142], [918, 138], [923, 140], [933, 137], [942, 135], [957, 136], [963, 138], [973, 143]],
    deal: ["blue", "1.30", "46", "9", "blue", "1.30", "49", "4"]
  },
  {
    id: "USDCHF", desc: "US Dollar vs Swiss Franc", box: [267, 198, 370, 129],
    frame: [269.5, 200.5, 598.5, 311], grid: 291, rows: [213.5, 237.5, 262, 287], labels: [["0.86110", 213.5], ["0.85895", 237.5], ["0.85465", 287]],
    now: ["0.85699", 259.5], times: ["4 Oct 2024", "7 Oct 12:00", "8 Oct 04:00", "8 Oct 20:00", "9 Oct 12:00", "10 Oct 04:00", "10 Oct 20:00"],
    track: [[318, 262], [323, 275], [328, 293], [332, 275], [340, 293], [350, 291], [357, 294], [367, 298], [375, 296], [384, 299], [388, 282], [394, 268], [402, 264], [413, 254], [423, 258], [437, 256], [447, 250], [460, 260], [468, 250], [477, 238], [490, 222], [500, 221], [513, 223], [523, 225], [530, 218], [538, 230], [542, 240], [547, 248], [557, 253], [560, 262], [570, 268], [580, 260], [593, 261]],
    noise: 5, spikes: [[542, 211, 274], [530, 212, 232], [329, 286, 302], [333, 266, 295], [548, 240, 268], [554, 242, 264]],
    avg: [[320, 250], [330, 262], [347, 278], [363, 292], [382, 297], [397, 290], [413, 273], [427, 262], [447, 255], [465, 257], [483, 247], [503, 232], [520, 222], [537, 225], [553, 237], [570, 255], [588, 263], [593, 262]],
    deal: ["blue", "0.85", "69", "9", "blue", "0.85", "72", "7"]
  },
  {
    id: "USDJPY", desc: "US Dollar vs Japanese Yen", box: [649, 198, 370, 129],
    frame: [651.5, 200.5, 979.5, 311], split: 273.5, grid: 675, rows: [225, 249], labels: [["149.000", 225], ["148.075", 249], ["0.7197", 279], ["0.0000", 303], ["-0.1741", 308]],
    now: ["148.636", 234], times: ["4 Oct 2024", "7 Oct 13:00", "8 Oct 05:00", "8 Oct 21:00", "9 Oct 13:00", "10 Oct 05:00", "10 Oct 21:00"],
    track: [[797, 243], [813, 248], [822, 243], [830, 237], [847, 234], [857, 222], [873, 218], [890, 222], [898, 217], [907, 220], [920, 230], [927, 235], [937, 230], [950, 237], [960, 234], [975, 234]],
    noise: 4, spikes: [[923, 209, 245], [763, 262, 269], [898, 211, 225], [927, 225, 243], [935, 224, 241]],
    lower: "MACD(12,26,9) -0.0615 -0.0794", lowerY: 284,
    hist: [[652, 286], [683, 286], [693, 292], [707, 299], [720, 303], [750, 307], [780, 307], [797, 304], [813, 302], [840, 301], [857, 295], [870, 291], [890, 294], [907, 297], [920, 303], [940, 306], [960, 307], [975, 306]],
    dash: [[690, 285], [707, 295], [730, 302], [770, 309], [797, 304], [840, 301], [873, 292], [900, 294], [923, 301], [950, 308], [975, 307]],
    deal: ["red", "148", "63", "6", "blue", "148", "66", "2"]
  }
];

const at = (points, x) => {
  for (let i = 1; i < points.length; i++) {
    const [ax, ay] = points[i - 1], [bx, by] = points[i];
    if (x <= bx) return ay + (by - ay) * (x - ax) / (bx - ax);
  }
  return points[points.length - 1][1];
};
const path = (points, color, extra = "") => `<polyline points="${points.join(" ")}" fill="none" stroke="${color}" ${extra}/>`;
const line = (x1, y1, x2, y2, color, extra = "") => `<line x1="${x1}" y1="${y1}" x2="${x2}" y2="${y2}" stroke="${color}" ${extra}/>`;
const rect = (x, y, w, h, fill) => `<rect x="${x}" y="${y}" width="${w}" height="${h}" fill="${fill}"/>`;

function plot(c) {
  const [l, t, r, b] = c.frame;
  let s = "";
  for (let i = 0; i < 13; i++) s += line(c.grid + i * 24.15, t, c.grid + i * 24.15, b, "#8a8f94", 'stroke-width=".8" stroke-dasharray="3 3"');
  for (const y of c.rows) s += line(l, y, r, y, "#8a8f94", 'stroke-width=".8" stroke-dasharray="3 3"');
  s += line(l, c.now[1], r, c.now[1], "#7a858f");
  let seed = 7;
  const rnd = () => (seed = seed * 16807 % 2147483647) / 2147483647;
  if (c.track) for (let x = c.track[0][0]; x <= c.track[c.track.length - 1][0]; x += 3) {
    const y = at(c.track, x) + (rnd() - .5) * 2, h = c.noise * (.5 + rnd());
    s += line(x, y - h, x, y + h, "#25b52b");
    s += c.solid ? line(x, y - h / 2, x, y + h / 2, "#50e850", 'stroke-width="2"') : line(x, y, x + 2, y, "#25b52b");
  }
  for (const [x, y1, y2] of c.spikes || []) s += line(x, y1, x, y2, "#2cc433");
  for (const [x, hi, lo, a, z, full] of c.candles || []) {
    s += line(x, hi, x, lo, "#2cc433");
    s += `<rect x="${x - 1.5}" y="${a}" width="3" height="${z - a}" fill="${full ? "#d8ffd8" : "#000"}" stroke="#2cd433" stroke-width=".8"/>`;
  }
  if (c.avg) s += path(c.avg, "#b8201c");
  if (c.line) s += path(c.line, "#2e7f76");
  if (c.hist) for (let x = 653; x < 976; x += 3) s += line(x, at(c.hist, x), x, 304.5, "#b5b5b5");
  if (c.dash) s += path(c.dash, "#b8202c", 'stroke-dasharray="2 1"');
  if (c.split) s += line(l, c.split, r, c.split, "#aaa", 'stroke-width="2"');
  s += `<rect x="${l}" y="${t}" width="${r - l}" height="${b - t}" fill="none" stroke="#ddd"/>`;
  if (c.lower) s += `<text x="${l + 2}" y="${c.lowerY}">${c.lower}</text>`;
  for (const [v, y] of c.labels) s += line(r, y, r + 3, y, "#ddd") + `<text x="${r + 4}" y="${y + 2.5}">${v}</text>`;
  s += rect(r + 2, c.now[1] - 4, 29, 8, "#8895a3") + `<text class="now" x="${r + 4}" y="${c.now[1] + 2.5}">${c.now[0]}</text>`;
  c.times.forEach((v, i) => {
    const x = i ? c.grid + 24.15 * (2 * i - 1) : l;
    s += line(x, b, x, b + 3, "#ddd") + `<text x="${x}" y="${b + 9}">${v}</text>`;
  });
  const x = c.box[0] + 5, y = Math.floor(t) + 4;
  s += rect(x, y, 11, 8, "#f4f8fb");
  for (const dy of [1, 3, 5]) s += rect(x + 1, y + dy, 4, 1, "#e0423a") + rect(x + 6, y + dy, 4, 1, "#2f8ad0");
  s += rect(x + 16, y, 11, 8, "#f4f8fb") + rect(x + 17, y + 1, 2, 5, "#e0423a") + rect(x + 20, y, 2, 4, "#303840") + rect(x + 24, y + 2, 2, 6, "#2f8ad0");
  s += `<text x="${x + 32}" y="${y + 7}">${c.id}, H1:&#160; ${c.desc}</text>`;
  return `<svg viewBox="${c.box.join(" ")}" role="img" aria-label="${c.id}">${s}</svg>`;
}

const quote = (name, color, small, big, sup) =>
  `<button class="quote ${color} ${name.toLowerCase()}"><span class="side-name">${name}</span><span class="price"><small>${small}</small><big>${big}</big><sup>${sup}</sup></span></button>`;

document.getElementById("windows").innerHTML = charts.map(c => `
  <article class="win ${c.focus ? "focus" : ""}">
    <div class="win-bar"><svg class="ic"><use href="#i-candles"/></svg>${c.id},H1<span class="ctl"><button class="min" aria-label="最小化"></button><button aria-label="最大化"></button><button class="close" aria-label="閉じる"></button></span></div>
    <div class="chart">${plot(c)}
      <div class="deal">${quote("SELL", ...c.deal.slice(0, 4))}${quote("BUY", ...c.deal.slice(4))}
        <div class="lot"><button aria-label="減らす">▼</button><input aria-label="${c.id} 数量" value="0.01"><button aria-label="増やす">▲</button></div>
      </div>
    </div>
  </article>`).join("");
```
